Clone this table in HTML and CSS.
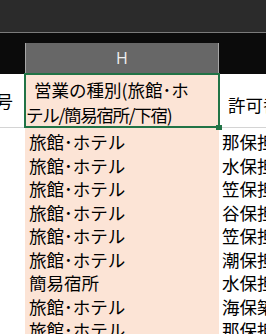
FILE: index.html
```html
<!DOCTYPE html>
<html lang="ja">
<head>
    <meta charset="UTF-8">
    <meta name="viewport" content="width=device-width, initial-scale=1.0">
    <title>営業の種別</title>
    <link rel="stylesheet" href="styles.css">
</head>
<body>
    <div class="app">
        <div class="ribbon"></div>

        <div class="col-heads">
            <div class="col-head">H</div>
        </div>

        <div class="sheet">
            <div class="row row-head">
                <div class="cell cell-g"><span>番号</span></div>
                <div class="cell cell-h selected">
                    <span class="line first">営業の種別(旅館･ホ</span><br>
                    <span class="line second">テル/簡易宿所/下宿)</span>
                    <span class="fill-handle"></span>
                </div>
                <div class="cell cell-i">許可番号</div>
            </div>

            <div class="row"><div class="cell cell-g"></div><div class="cell cell-h">旅館･ホテル</div><div class="cell cell-i">那保担</div></div>
            <div class="row"><div class="cell cell-g"></div><div class="cell cell-h">旅館･ホテル</div><div class="cell cell-i">水保担</div></div>
            <div class="row"><div class="cell cell-g"></div><div class="cell cell-h">旅館･ホテル</div><div class="cell cell-i">笠保担</div></div>
            <div class="row"><div class="cell cell-g"></div><div class="cell cell-h">旅館･ホテル</div><div class="cell cell-i">谷保担</div></div>
            <div class="row"><div class="cell cell-g"></div><div class="cell cell-h">旅館･ホテル</div><div class="cell cell-i">笠保担</div></div>
            <div class="row"><div class="cell cell-g"></div><div class="cell cell-h">旅館･ホテル</div><div class="cell cell-i">潮保担</div></div>
            <div class="row"><div class="cell cell-g"></div><div class="cell cell-h">簡易宿所</div><div class="cell cell-i">水保担</div></div>
            <div class="row"><div class="cell cell-g"></div><div class="cell cell-h">旅館･ホテル</div><div class="cell cell-i">海保築</div></div>
            <div class="row"><div class="cell cell-g"></div><div class="cell cell-h">旅館･ホテル</div><div class="cell cell-i">那保担</div></div>
        </div>
    </div>
</body>
</html>
```

FILE: styles.css
```css
body { margin: 0; background: #fff; overflow: hidden; }
.app { width: 266px; height: 334px; overflow: hidden; font-family: "Noto Sans CJK JP", sans-serif; color: #000; }

/* dark window chrome above the sheet */
.ribbon { height: 32px; background: #2b2b2b; border-bottom: 1px solid #7b7b7b; }
.col-heads { height: 41px; padding-top: 10px; box-sizing: border-box; background: #0b0b0b; }
.col-head {
    margin-left: 25px; width: 194px; height: 31px; box-sizing: border-box;
    background: #676767; border-left: 1px solid #a6a6a6; border-right: 1px solid #a6a6a6;
    color: #f0f0f0; font: 16px/30px "Open Sans", sans-serif; text-align: center;
}

/* cells */
.sheet { display: grid; grid-template-columns: 25px 194px 47px; }
.row { display: contents; }
.cell { height: 23.5px; box-sizing: border-box; padding-top: 4px; font-size: 17.5px; line-height: 19px; white-space: nowrap; overflow: hidden; }
.cell-h { background: #fce4d6; padding-left: 4px; }
.cell-i { padding-left: 3px; }

.row-head .cell { height: 54px; border-bottom: 1px solid #d4d4d4; }
.row-head .cell-g { display: flex; justify-content: flex-end; align-items: center; padding: 0 12px 0 0; }
.row-head .cell-h { position: relative; overflow: visible; padding: 3px 0 0 1px; line-height: 25px; border-bottom-color: #fce4d6; }
.row-head .cell-i { padding: 21px 0 0 9px; }
.line.first { display: inline-block; text-indent: 8px; }
.line.second { letter-spacing: -1.3px; }

/* active cell outline and its fill handle */
.selected::after {
    content: ""; position: absolute; left: -1px; right: -1px; top: -1px; bottom: -1px;
    border: 2px solid #217346;
}
.fill-handle {
    position: absolute; right: -3px; bottom: -3px; width: 6px; height: 5px;
    background: #217346; z-index: 1;
}
```
